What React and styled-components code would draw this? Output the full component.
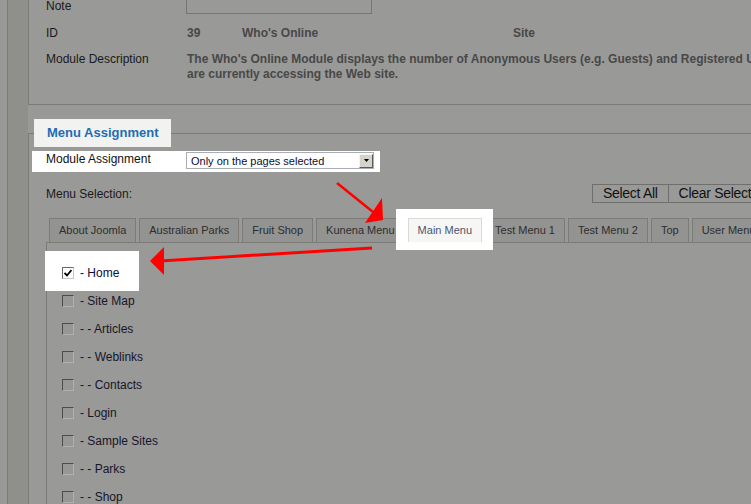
import React from "react";
import styled, { createGlobalStyle } from "styled-components";

const TABS = [
  "About Joomla",
  "Australian Parks",
  "Fruit Shop",
  "Kunena Menu",
  "Main Menu",
  "Test Menu 1",
  "Test Menu 2",
  "Top",
  "User Menu",
];

const ITEMS = [
  { label: "- Home", checked: true },
  { label: "- Site Map" },
  { label: "- - Articles" },
  { label: "- - Weblinks" },
  { label: "- - Contacts" },
  { label: "- Login" },
  { label: "- Sample Sites" },
  { label: "- - Parks" },
  { label: "- - Shop" },
];

function Check({ checked }) {
  return (
    <Styled.Box checked={checked}>
      {checked && (
        <svg width="8" height="8" viewBox="0 0 8 8">
          <path d="M0.5 4 L3 6.5 L7.5 1" fill="none" stroke="#000" strokeWidth="1.8" />
        </svg>
      )}
    </Styled.Box>
  );
}

export default function App() {
  return (
    <>
      <GlobalStyle />
      <Styled.Page>
        <Styled.Rail />
        <Styled.Main>
          <Styled.Details>
            <Styled.DetailRow>
              <Styled.Label>Note</Styled.Label>
              <Styled.NoteInput />
            </Styled.DetailRow>
            <Styled.DetailRow>
              <Styled.Label>ID</Styled.Label>
              <Styled.Values>
                <Styled.Value w={55}>39</Styled.Value>
                <Styled.Value w={271}>Who's Online</Styled.Value>
                <Styled.Value>Site</Styled.Value>
              </Styled.Values>
            </Styled.DetailRow>
            <Styled.DescRow>
              <Styled.Label>Module Description</Styled.Label>
              <Styled.Desc>
                The Who's Online Module displays the number of Anonymous Users (e.g. Guests) and Registered Users (ones logged-in) that
                <br />
                are currently accessing the Web site.
              </Styled.Desc>
            </Styled.DescRow>
          </Styled.Details>

          <Styled.Assign>
            <Styled.Legend>Menu Assignment</Styled.Legend>
            <Styled.AssignRow>
              <Styled.AssignLabel>Module Assignment</Styled.AssignLabel>
              <Styled.Select>
                <span>Only on the pages selected</span>
                <Styled.SelectBtn>
                  <svg width="5" height="3" viewBox="0 0 5 3">
                    <path d="M0 0 H5 L2.5 3 Z" fill="#000" />
                  </svg>
                </Styled.SelectBtn>
              </Styled.Select>
            </Styled.AssignRow>
            <Styled.SelectionRow>
              <Styled.SelLabel>Menu Selection:</Styled.SelLabel>
              <Styled.BtnGroup>
                <Styled.Button>Select All</Styled.Button>
                <Styled.Button>Clear Selection</Styled.Button>
              </Styled.BtnGroup>
            </Styled.SelectionRow>
            <Styled.Tabs>
              {TABS.map((t) =>
                t === "Main Menu" ? (
                  <Styled.Spot key={t}>
                    <Styled.Tab active>{t}</Styled.Tab>
                  </Styled.Spot>
                ) : (
                  <Styled.Tab key={t}>{t}</Styled.Tab>
                )
              )}
            </Styled.Tabs>
            <Styled.Panel>
              {ITEMS.map((item) => (
                <Styled.Item key={item.label} highlight={item.checked}>
                  <Check checked={item.checked} />
                  <Styled.ItemText highlight={item.checked}>{item.label}</Styled.ItemText>
                </Styled.Item>
              ))}
            </Styled.Panel>
          </Styled.Assign>
        </Styled.Main>

        <Styled.Arrows width="751" height="504" viewBox="0 0 751 504">
          <line x1="337" y1="183" x2="373" y2="212" stroke="#ff0000" strokeWidth="2.5" />
          <polygon points="365,223 382,198 383,220" fill="#ff0000" />
          <line x1="160" y1="261" x2="372" y2="248" stroke="#ff0000" strokeWidth="3" />
          <polygon points="150,261 164,247 164,275" fill="#ff0000" />
        </Styled.Arrows>
      </Styled.Page>
    </>
  );
}

const GlobalStyle = createGlobalStyle`
  html, body {
    margin: 0;
    background: #999997;
    overflow: hidden;
  }
  body {
    font-family: "Liberation Sans", Arial, sans-serif;
    color: #1a1a1a;
  }
`;

const line = "#7b7b78";

const Styled = {
  Page: styled.div`
    position: relative;
    display: flex;
    width: 751px;
    height: 504px;
    overflow: hidden;
  `,
  Rail: styled.div`
    flex: 0 0 20px;
    margin-left: 7px;
    border-left: 1px solid ${line};
    background: #8f8f8c;
  `,
  Main: styled.div`
    flex: 0 0 820px;
    display: flex;
    flex-direction: column;
  `,
  Details: styled.div`
    margin-top: -8px;
    padding: 0 0 22px 17px;
    border: 1px solid ${line};
    border-top: none;
  `,
  DetailRow: styled.div`
    display: grid;
    grid-template-columns: 140px 1fr;
    align-items: center;
    height: 27px;
    font-size: 12px;
  `,
  DescRow: styled.div`
    display: grid;
    grid-template-columns: 140px 1fr;
    align-items: start;
    padding-top: 6px;
    font-size: 12px;
    line-height: 15px;
  `,
  Label: styled.div`
    color: #1a1a1a;
    font-size: 12px;
  `,
  NoteInput: styled.div`
    width: 186px;
    height: 20px;
    margin-top: -4px;
    box-sizing: border-box;
    border: 1px solid #767674;
  `,
  Values: styled.div`
    display: flex;
    padding-left: 1px;
    font-weight: bold;
    color: #484848;
  `,
  Value: styled.span`
    width: ${(p) => (p.w ? `${p.w}px` : "auto")};
  `,
  Desc: styled.div`
    padding-left: 1px;
    font-weight: bold;
    color: #484848;
    white-space: nowrap;
  `,
  Assign: styled.fieldset`
    margin: 14px 0 0 0;
    padding: 4px 0 0 3px;
    min-width: 0;
    border: 1px solid ${line};
    border-bottom: none;
  `,
  Legend: styled.legend`
    margin-left: 2px;
    padding: 0 13px;
    height: 28px;
    line-height: 28px;
    background: #f2f3f1;
    color: #1e6db4;
    font-size: 13px;
    font-weight: bold;
  `,
  AssignRow: styled.div`
    display: flex;
    align-items: flex-start;
    width: 348px;
    height: 21px;
    box-sizing: border-box;
    padding: 1px 0 0 14px;
    background: #ffffff;
  `,
  AssignLabel: styled.div`
    width: 140px;
    font-size: 12px;
    line-height: 15px;
    color: #111;
  `,
  Select: styled.div`
    display: flex;
    align-items: center;
    justify-content: space-between;
    width: 188px;
    height: 17px;
    box-sizing: border-box;
    padding: 0 0 0 4px;
    border: 1px solid #a9aeb4;
    font-size: 11px;
    color: #0d0d2e;
  `,
  SelectBtn: styled.span`
    display: flex;
    align-items: center;
    justify-content: center;
    width: 14px;
    height: 14px;
    box-sizing: border-box;
    background: #d6d3cc;
    border: 1px solid;
    border-color: #f4f4f4 #5a5a5a #5a5a5a #f4f4f4;
  `,
  SelectionRow: styled.div`
    display: grid;
    grid-template-columns: 560px auto;
    align-items: center;
    margin-top: 12px;
  `,
  SelLabel: styled.div`
    padding-left: 14px;
    font-size: 12px;
    color: #1a1a1a;
  `,
  BtnGroup: styled.div`
    display: flex;
  `,
  Button: styled.div`
    height: 19px;
    box-sizing: border-box;
    padding: 0 10px;
    border: 1px solid #6f6f6d;
    font-size: 14px;
    line-height: 17px;
    letter-spacing: -0.3px;
    color: #111;
    white-space: nowrap;
    & + & {
      margin-left: -1px;
    }
  `,
  Tabs: styled.div`
    display: flex;
    gap: 3px;
    margin: 15px 0 0 17px;
  `,
  Spot: styled.div`
    position: relative;
    display: flex;
    &::before {
      content: "";
      position: absolute;
      top: -9px;
      bottom: -8px;
      left: -12px;
      right: -11px;
      background: #ffffff;
    }
  `,
  Tab: styled.div`
    position: ${(p) => (p.active ? "relative" : "static")};
    height: 24px;
    box-sizing: border-box;
    padding: 0 9px;
    border: 1px solid ${(p) => (p.active ? "#dadad8" : line)};
    border-bottom: none;
    background: ${(p) => (p.active ? "#f6f7f5" : "#939391")};
    font-size: 11px;
    line-height: 23px;
    color: ${(p) => (p.active ? "#4b5570" : "#2e2e2e")};
    white-space: nowrap;
  `,
  Panel: styled.div`
    margin-left: 14px;
    padding: 16px 0 0 15px;
    border-top: 1px solid ${line};
    border-left: 1px solid ${line};
    height: 300px;
  `,
  Item: styled.div`
    position: relative;
    display: flex;
    align-items: center;
    gap: 6px;
    width: fit-content;
    height: 28px;
    ${(p) =>
      p.highlight &&
      `
      &::before {
        content: "";
        position: absolute;
        top: -8px;
        bottom: -4px;
        left: -17px;
        width: 94px;
        background: #ffffff;
      }
    `}
  `,
  Box: styled.span`
    position: relative;
    display: flex;
    align-items: center;
    justify-content: center;
    width: 12px;
    height: 12px;
    box-sizing: border-box;
    border: 1px solid;
    border-color: ${(p) =>
      p.checked ? "#6a6a6a #c8c8c8 #c8c8c8 #6a6a6a" : "#4c4c4b #b0b0ae #b0b0ae #4c4c4b"};
    background: ${(p) => (p.checked ? "#ffffff" : "#979795")};
  `,
  ItemText: styled.span`
    position: relative;
    font-size: 12px;
    color: ${(p) => (p.highlight ? "#0c0c3a" : "#16162a")};
  `,
  Arrows: styled.svg`
    position: absolute;
    top: 0;
    left: 0;
    pointer-events: none;
  `,
};
